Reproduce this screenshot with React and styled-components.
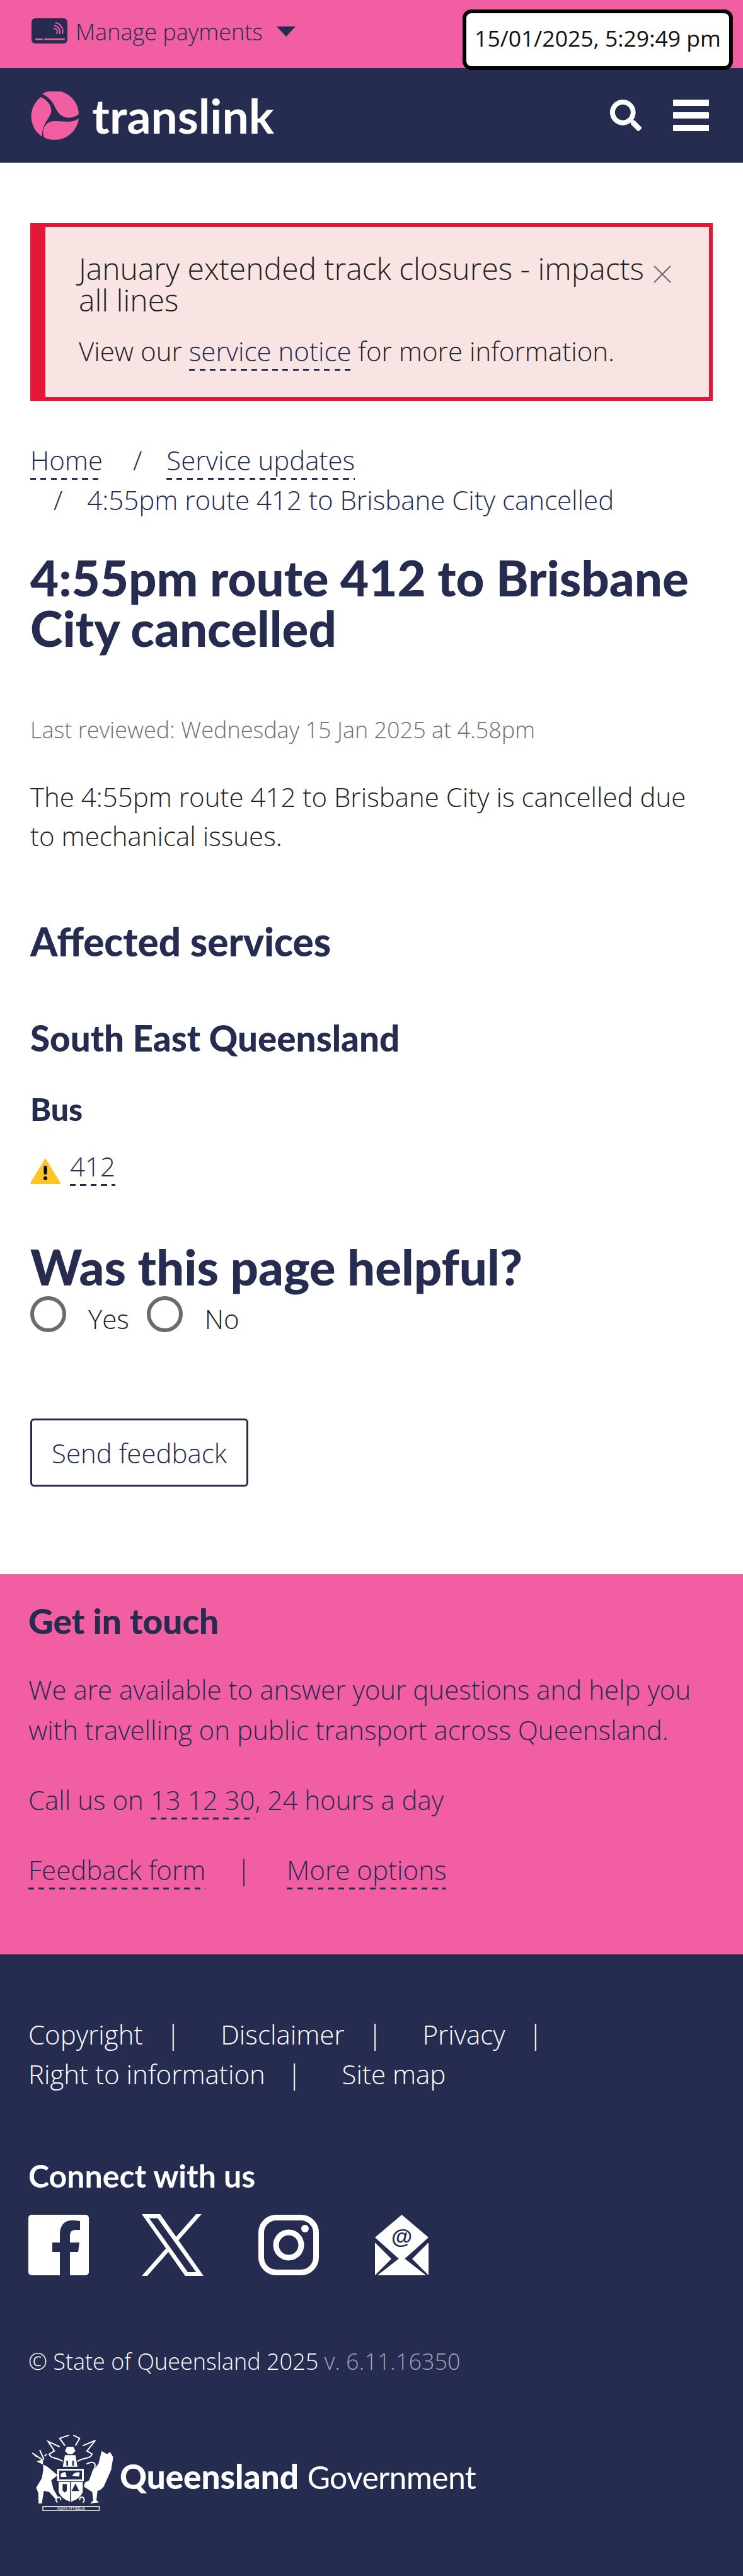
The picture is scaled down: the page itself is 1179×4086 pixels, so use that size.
import React from 'react';
import styled, { createGlobalStyle } from 'styled-components';
import { FaSearch } from 'react-icons/fa';

const navy = '#252c4f';
const pink = '#f15fa2';

const GlobalStyle = createGlobalStyle`
  html, body {
    margin: 0;
    padding: 0;
    background: white;
  }
  body {
    font-family: "Open Sans", "Noto Sans", sans-serif;
    font-weight: 300;
    color: #222;
  }
  * {
    box-sizing: border-box;
  }
`;

const Page = styled.div`
  position: relative;
  width: 1179px;
  height: 4086px;
  overflow: hidden;
  background: white;
`;

const PayBar = styled.div`
  height: 108px;
  background: ${pink};
  color: ${navy};
  display: flex;
  align-items: flex-start;
  padding: 29px 0 0 50px;
`;

const PayLabel = styled.span`
  font-size: 36px;
  line-height: 50px;
  margin-left: 13px;
  margin-top: -3px;
`;

const Caret = styled.span`
  width: 0;
  height: 0;
  margin: 13px 0 0 22px;
  border-left: 15px solid transparent;
  border-right: 15px solid transparent;
  border-top: 16px solid ${navy};
`;

// the clock floats over both header bars
const Clock = styled.div`
  position: absolute;
  top: 15px;
  left: 734px;
  width: 429px;
  height: 96px;
  background: white;
  border: 6px solid black;
  border-radius: 14px;
  color: #111;
  font-size: 35.500px;
  font-weight: 400;
  line-height: 78px;
  text-align: center;
  white-space: nowrap;
`;

const NavBar = styled.header`
  height: 150px;
  background: ${navy};
  display: flex;
  align-items: center;
  padding: 0 54px 0 48px;
`;

const LogoText = styled.span`
  font-family: Lato, "Open Sans", sans-serif;
  font-weight: 700;
  font-size: 75px;
  line-height: 76px;
  color: white;
  margin-left: 21px;
  flex: 1;
`;

const SearchIcon = styled(FaSearch)`
  color: white;
  font-size: 50px;
  margin-right: 50px;
`;

const Burger = styled.div`
  display: flex;
  flex-direction: column;
  gap: 10px;
  width: 57px;
  span {
    height: 10px;
    background: white;
    border-radius: 1px;
  }
`;

const Main = styled.main`
  padding: 96px 48px 0;
  height: 2239px;
`;

const Alert = styled.div`
  display: flex;
  height: 282px;
  background: #f9e4e4;
  border: 6px solid #e31837;
  border-left-width: 24px;
  padding: 41px 60px 0 53px;
`;

const AlertBody = styled.div`
  flex: 1;
`;

const AlertTitle = styled.div`
  font-size: 48px;
  line-height: 50px;
  color: #222;
`;

const AlertText = styled.p`
  font-size: 42px;
  line-height: 62px;
  margin: 25px 0 0;
  color: #222;
`;

const CloseBtn = styled.svg`
  width: 28px;
  height: 28px;
  margin: 20px 0 0 4px;
  flex: none;
`;

const DashLink = styled.a`
  color: ${navy};
  padding-bottom: 3px;
  background: repeating-linear-gradient(to right, ${navy} 0 9px, transparent 9px 16.5px) left bottom / 100% 3px no-repeat;
`;

const Crumbs = styled.ol`
  list-style: none;
  display: flex;
  flex-wrap: wrap;
  column-gap: 11px;
  margin: 62px 0 0;
  padding: 0;
  font-size: 42px;
  line-height: 63px;
  color: ${navy};
`;

const Crumb = styled.li`
  padding-left: ${props => props.$first ? 0 : '37px'};
`;

const CrumbSep = styled.span`
  margin-right: 39px;
`;

const H1 = styled.h1`
  font-family: Lato, "Open Sans", sans-serif;
  font-weight: 900;
  font-size: 78px;
  line-height: 80px;
  color: ${navy};
  margin: 52px 0 0;
`;

const Reviewed = styled.p`
  font-size: 36px;
  line-height: 50px;
  color: #707070;
  margin: 97px 0 0;
`;

const Lead = styled.p`
  font-size: 42px;
  line-height: 62px;
  margin: 50px 0 0;
  color: #222;
`;

const H2 = styled.h2`
  font-family: Lato, "Open Sans", sans-serif;
  font-weight: 900;
  font-size: 62px;
  line-height: 70px;
  color: ${navy};
  margin: 101px 0 0;
`;

const H3 = styled.h3`
  font-family: Lato, "Open Sans", sans-serif;
  font-weight: 900;
  font-size: 56.500px;
  line-height: 60px;
  color: ${navy};
  margin: 88px 0 0;
`;

const H4 = styled.h4`
  font-family: Lato, "Open Sans", sans-serif;
  font-weight: 900;
  font-size: 50px;
  line-height: 56px;
  color: ${navy};
  margin: 55px 0 0;
`;

const RouteRow = styled.div`
  display: flex;
  align-items: flex-start;
  gap: 15px;
  font-size: 42px;
  line-height: 62px;
  margin-top: 32px;
`;

const WarnIcon = styled.svg`
  width: 48px;
  height: 41px;
  margin-top: 18px;
  flex: none;
`;

const HelpTitle = styled.h2`
  font-family: Lato, "Open Sans", sans-serif;
  font-weight: 900;
  font-size: 78px;
  line-height: 80px;
  color: ${navy};
  margin: 88px 0 0;
`;

const Options = styled.div`
  display: flex;
  align-items: flex-start;
  margin-top: 7px;
`;

const Radio = styled.span`
  width: 57px;
  height: 57px;
  border-radius: 50%;
  border: 6px solid #6b6b6b;
  flex: none;
`;

const OptionLabel = styled.span`
  font-size: 42px;
  line-height: 62px;
  margin: 5px 28px 0 35px;
  color: #222;
`;

const SendBtn = styled.button`
  display: block;
  width: 346px;
  height: 108px;
  margin-top: 127px;
  background: white;
  border: 3px solid ${navy};
  border-radius: 6px;
  color: ${navy};
  font-family: inherit;
  font-size: 42px;
  font-weight: 300;
  padding: 0;
`;

const Touch = styled.section`
  height: 603px;
  background: ${pink};
  color: ${navy};
  padding: 44px 45px 0;
`;

const TouchTitle = styled.h2`
  font-family: Lato, "Open Sans", sans-serif;
  font-weight: 900;
  font-size: 55px;
  line-height: 60px;
  margin: 0;
`;

const TouchText = styled.p`
  font-size: 42px;
  line-height: 64px;
  margin: ${props => props.$gap}px 0 0;
`;

const Pipe = styled.span`
  margin: 0 ${props => props.$right}px 0 ${props => props.$left}px;
`;

const Foot = styled.footer`
  height: 986px;
  background: ${navy};
  color: white;
  padding: 95px 45px 0;
`;

const FootLinks = styled.div`
  font-size: 42px;
  line-height: 63px;
`;

const ConnectTitle = styled.h2`
  font-family: Lato, "Open Sans", sans-serif;
  font-weight: 700;
  font-size: 50px;
  line-height: 56px;
  margin: 102px 0 0;
`;

const Socials = styled.div`
  display: flex;
  align-items: center;
  margin-top: 33px;
  height: 98px;
`;

const SocialIcon = styled.svg`
  width: ${props => props.$w}px;
  height: ${props => props.$h || 96}px;
  margin-right: ${props => props.$mr}px;
  flex: none;
`;

const Legal = styled.p`
  font-size: 36px;
  line-height: 50px;
  margin: 111px 0 0;
  span {
    color: #9ea3b5;
  }
`;

const GovRow = styled.div`
  display: flex;
  align-items: flex-start;
  margin: 90px 0 0 3px;
`;

const Crest = styled.svg`
  width: 132px;
  height: 122px;
  flex: none;
`;

const GovName = styled.div`
  font-family: Lato, "Noto Sans", sans-serif;
  font-size: 53px;
  font-weight: 400;
  line-height: 60px;
  margin: 37px 0 0 10px;
  white-space: nowrap;
  b {
    font-weight: 900;
  }
  span {
    font-size: 50px;
    letter-spacing: -0.7px;
  }
`;

const CardIcon = () => (
  <svg width="57" height="40" viewBox="0 0 57 40">
    <rect width="57" height="40" rx="6" fill={navy} />
    <rect x="6" y="32" width="12" height="2.5" rx="1" fill={pink} />
    <rect x="20" y="32" width="33" height="2.5" rx="1" fill={pink} />
    <g fill="none" stroke={pink} strokeWidth="2">
      <path d="M35 17a4 4 0 0 1 4 7" />
      <path d="M36 12a9 9 0 0 1 8 13" />
      <path d="M38 7a14 14 0 0 1 11 18" />
    </g>
  </svg>
);

const Swirl = () => (
  <svg width="77" height="77" viewBox="0 0 77 77">
    <g fill={pink}>
      <path d="M19 4A38.500 38.500 0 0 1 77 36C68 44 52 44 44 33C38 24 36 12 19 4Z" />
      <path d="M77 43A38.500 38.500 0 0 1 22 73C18 62 22 52 32 48C45 44 62 53 77 43Z" />
      <path d="M17 9C26 13 35 22 33 33C31 43 18 52 19 72A38.500 38.500 0 0 1 17 9Z" />
    </g>
  </svg>
);

const CrestMark = () => (
  <Crest viewBox="50 70 396 366">
    <g fill="white">
      <path d="M110 190L80 200L105 212L130 224L180 265L150 290L160 330L185 375L170 378L140 345L115 340L105 400L90 400L88 350L78 325L105 280L112 240Z" />
      <path d="M345 250L375 210L390 150L415 165L430 155L445 180L435 240L400 320L385 335L370 340L365 385L378 395L335 400L350 385L345 345L305 320L310 300L330 290Z" />
      <path d="M225 130L255 130L265 150L250 165L230 165L215 150Z" />
      <path d="M215 170H265L275 225H205Z" />
      <rect x="178" y="235" width="127" height="58" />
      <path d="M185 297H240V392Q195 375 185 345Z" />
      <path d="M245 297H300V345Q290 375 245 392Z" />
    </g>
    <g fill={navy}>
      <path d="M188 243H296V285H188Z" />
      <path d="M222 196h8v24h-8zM250 196h8v24h-8z" />
      <path d="M204 308h20v30l-10 10l-10-10z" />
      <path d="M265 305l18 36h-36z" />
    </g>
    <g fill="white">
      <path d="M195 262q10-14 24-10l4 22h-28z" />
      <path d="M250 268q8-20 36-16l-4 20z" />
    </g>
    <g fill="none" stroke="white" strokeWidth="6">
      <path d="M112 195L60 160M85 178L70 170M115 190L95 145M118 175L128 165" />
      <path d="M335 205Q368 200 355 235L345 255M335 205L318 212" />
      <path d="M205 200C180 180 150 190 140 165L165 150L135 105L190 130" />
      <path d="M275 200C300 180 335 190 345 165L320 150L360 100L300 125" />
      <path d="M215 125L190 90L235 75M265 125L285 90L255 75" />
      <path d="M180 395Q165 385 180 370Q195 365 195 385M300 395Q315 385 300 370Q285 365 285 385" />
    </g>
    <rect x="110" y="414" width="268" height="20" fill="none" stroke="white" strokeWidth="4" />
    <text x="244" y="429" fill="white" fontSize="15" textAnchor="middle" fontFamily="Liberation Sans, sans-serif">AUDAX AT FIDELIS</text>
  </Crest>
);

const App = () => {
  return (
    <Page>
      <GlobalStyle />
      <PayBar>
        <CardIcon />
        <PayLabel>Manage payments</PayLabel>
        <Caret />
      </PayBar>
      <Clock>15/01/2025, 5:29:49 pm</Clock>
      <NavBar>
        <Swirl />
        <LogoText>translink</LogoText>
        <SearchIcon />
        <Burger><span /><span /><span /></Burger>
      </NavBar>

      <Main>
        <Alert>
          <AlertBody>
            <AlertTitle>January extended track closures - impacts all lines</AlertTitle>
            <AlertText>View our <DashLink>service notice</DashLink> for more information.</AlertText>
          </AlertBody>
          <CloseBtn viewBox="0 0 28 28">
            <path d="M1 1L27 27M27 1L1 27" stroke="#666" strokeWidth="2" />
          </CloseBtn>
        </Alert>

        <Crumbs>
          <Crumb $first><DashLink>Home</DashLink></Crumb>
          <Crumb><CrumbSep>/</CrumbSep><DashLink>Service updates</DashLink></Crumb>
          <Crumb><CrumbSep>/</CrumbSep>4:55pm route 412 to Brisbane City cancelled</Crumb>
        </Crumbs>

        <H1>4:55pm route 412 to Brisbane City cancelled</H1>
        <Reviewed>Last reviewed: Wednesday 15 Jan 2025 at 4.58pm</Reviewed>
        <Lead>The 4:55pm route 412 to Brisbane City is cancelled due to mechanical issues.</Lead>

        <H2>Affected services</H2>
        <H3>South East Queensland</H3>
        <H4>Bus</H4>
        <RouteRow>
          <WarnIcon viewBox="0 0 48 41">
            <path d="M24 2L46 38a1 1 0 0 1-1 2H3a1 1 0 0 1-1-2Z" fill="#ffc425" stroke="#ffc425" strokeWidth="2" strokeLinejoin="round" />
            <rect x="21.5" y="12" width="5" height="14" rx="2.5" fill="black" />
            <circle cx="24" cy="32" r="3" fill="black" />
          </WarnIcon>
          <span><DashLink>412</DashLink></span>
        </RouteRow>

        <HelpTitle>Was this page helpful?</HelpTitle>
        <Options>
          <Radio />
          <OptionLabel>Yes</OptionLabel>
          <Radio />
          <OptionLabel>No</OptionLabel>
        </Options>
        <SendBtn>Send feedback</SendBtn>
      </Main>

      <Touch>
        <TouchTitle>Get in touch</TouchTitle>
        <TouchText $gap={47}>We are available to answer your questions and help you with travelling on public transport across Queensland.</TouchText>
        <TouchText $gap={47}>Call us on <DashLink>13 12 30</DashLink>, 24 hours a day</TouchText>
        <TouchText $gap={47}><DashLink>Feedback form</DashLink><Pipe $left={49} $right={57}>|</Pipe><DashLink>More options</DashLink></TouchText>
      </Touch>

      <Foot>
        <FootLinks>
          Copyright<Pipe $left={37} $right={64}>|</Pipe>Disclaimer<Pipe $left={37} $right={64}>|</Pipe>Privacy<Pipe $left={37} $right={0}>|</Pipe><br />
          Right to information<Pipe $left={35} $right={64}>|</Pipe>Site map
        </FootLinks>

        <ConnectTitle>Connect with us</ConnectTitle>
        <Socials>
          <SocialIcon $w={96} $mr={84} viewBox="0 0 96 96">
            <path d="M5 0H91a5 5 0 0 1 5 5V91a5 5 0 0 1-5 5H66V59H79L81 44H66V34C66 28 68 24 75 24H82V10C79 9.500 74 9 69 9C57 9 50 17 50 31V44H38V59H50V96H5a5 5 0 0 1-5-5V5a5 5 0 0 1 5-5Z" fill="white" />
          </SocialIcon>
          <SocialIcon $w={98} $h={98} $mr={87} viewBox="0 0 1200 1227" preserveAspectRatio="none">
            <path d="M714 519L1161 0h-106L667 451 357 0H0l469 682L0 1227h106l410-476 327 476h357L714 519zM569 688l-48-68L144 80h163l305 437 48 68 396 566H893L569 688z" fill="white" />
          </SocialIcon>
          <SocialIcon $w={96} $mr={89} viewBox="0 0 96 96">
            <rect x="4.500" y="4.500" width="87" height="87" rx="24" fill="none" stroke="white" strokeWidth="9" />
            <circle cx="48" cy="48" r="20" fill="none" stroke="white" strokeWidth="9" />
            <circle cx="74" cy="22" r="6" fill="white" />
          </SocialIcon>
          <SocialIcon $w={85} $mr={0} viewBox="0 0 85 96">
            <path d="M42.500 0L85 36L42.500 74L0 36Z" fill="white" />
            <text x="42.500" y="46" fontSize="34" fontWeight="700" fill={navy} textAnchor="middle" fontFamily="Liberation Sans, sans-serif">@</text>
            <path d="M0 44L26 70L0 96ZM85 44L59 70L85 96Z" fill="white" />
            <path d="M4 96L42.500 66L81 96Z" fill="white" />
          </SocialIcon>
        </Socials>

        <Legal>© State of Queensland 2025 <span>v. 6.11.16350</span></Legal>

        <GovRow>
          <CrestMark />
          <GovName><b>Queensland</b> <span>Government</span></GovName>
        </GovRow>
      </Foot>
    </Page>
  );
};

export default App;
